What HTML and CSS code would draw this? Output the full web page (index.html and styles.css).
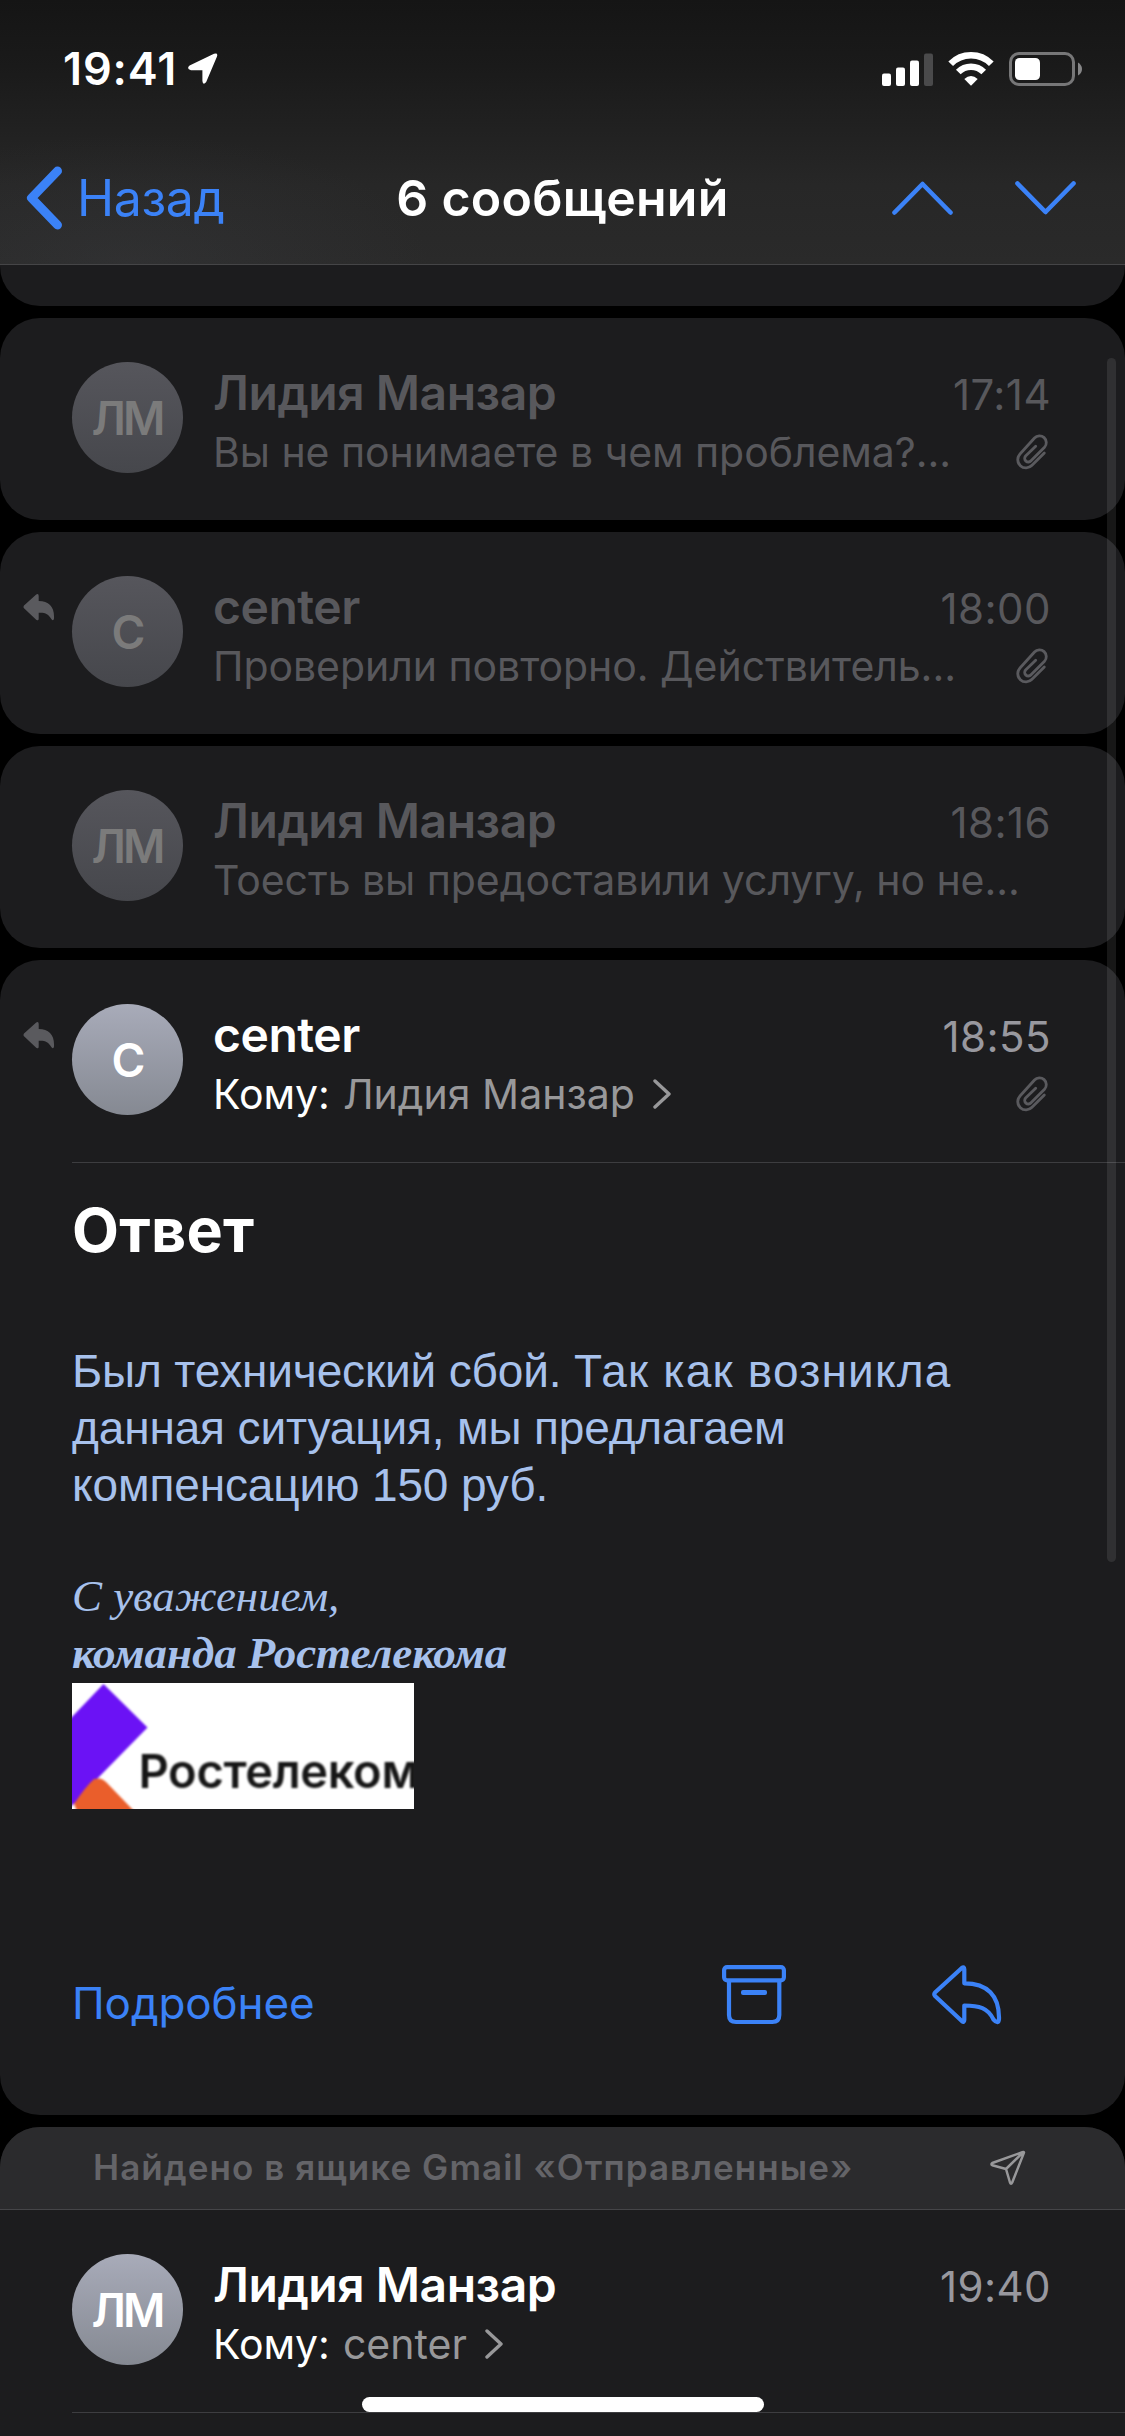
FILE: index.html
```html
<!DOCTYPE html>
<html lang="ru">
<head>
<meta charset="utf-8">
<title>6 сообщений</title>
<link rel="stylesheet" href="styles.css">
</head>
<body>
<svg class="symbols" width="0" height="0" aria-hidden="true">
  <symbol id="clip" viewBox="0 0 32 36"><path d="M28.3 19 16 31.3A8.2 8.2 0 0 1 4 20L18.5 4A6.7 6.7 0 0 1 28.5 13.2L15 26.8A3.6 3.6 0 0 1 9.6 22L19.7 12.2" fill="none" stroke="currentColor" stroke-width="2.8" stroke-linecap="round" stroke-linejoin="round"/></symbol>
  <symbol id="replied" viewBox="0 0 32 27"><path d="M1 11.6Q0 12.9 1 14.2L13.2 25.8Q15.6 27.3 15.7 24.8V18.8C22 18.4 25.5 20 28.3 25Q30.5 27.6 31 24.5C31.7 13 26 7 15.7 7V2Q15.6-.9 13.2 .6Z" fill="currentColor"/></symbol>
  <symbol id="more" viewBox="0 0 18 30"><path d="M2 2 16 15 2 28" fill="none" stroke="currentColor" stroke-width="3.4" stroke-linecap="round" stroke-linejoin="round"/></symbol>
</svg>

<div class="screen">
  <header class="top">
    <div class="status">
      <span class="clock">19:41</span>
      <svg class="location" width="30" height="32" viewBox="0 0 30 32"><path d="M26 .8Q30.2-.6 29 3.4L18.2 29Q15 33 14.4 28V17.3H3Q-2 15.8 1.6 12.6Z" fill="#fff"/></svg>
      <div class="indicators">
        <svg width="51" height="33" viewBox="0 0 51 33"><g fill="#fff"><rect y="20.5" width="9" height="12.5" rx="2"/><rect x="14" y="14.5" width="9" height="18.5" rx="2"/><rect x="28" y="7.5" width="9" height="25.500" rx="2"/></g><rect x="42" y=".5" width="9" height="32.500" rx="2" fill="#4a4a4b"/></svg>
        <svg width="46" height="34" viewBox="0 0 46 34"><g fill="none" stroke="#fff" stroke-width="6.600"><path d="M2.700 11.800A28.500 28.500 0 0 1 43.300 11.800"/><path d="M10.300 20A18 18 0 0 1 35.700 20"/></g><path d="M16.300 27Q23 21 29.700 27L23 33.800Z" fill="#fff"/></svg>
        <svg width="73" height="34" viewBox="0 0 73 34"><rect x="1.500" y="1.500" width="63" height="31" rx="8.500" fill="none" stroke="#777778" stroke-width="3"/><rect x="6" y="6" width="25" height="22" rx="4.500" fill="#fff"/><path d="M69 10.500Q73 13 73 17T69 23.500Z" fill="#868687"/></svg>
      </div>
    </div>
    <nav class="nav">
      <a class="back">
        <svg width="37" height="64" viewBox="0 0 37 64"><path d="M31.500 5 5.500 32 31.500 59" fill="none" stroke="currentColor" stroke-width="9" stroke-linecap="round" stroke-linejoin="round"/></svg>
        <span>Назад</span>
      </a>
      <h1 class="heading">6 сообщений</h1>
      <div class="steps">
        <svg width="61" height="34" viewBox="0 0 61 34"><path d="M2.500 31.500 30.500 3 58.500 31.500" fill="none" stroke="currentColor" stroke-width="4.600" stroke-linecap="round" stroke-linejoin="round"/></svg>
        <svg width="61" height="34" viewBox="0 0 61 34"><path d="M2.500 2.500 30.500 31 58.500 2.500" fill="none" stroke="currentColor" stroke-width="4.600" stroke-linecap="round" stroke-linejoin="round"/></svg>
      </div>
    </nav>
  </header>

  <main class="thread">
    <section class="card card-tail"></section>

    <article class="card message read">
      <div class="gutter"></div>
      <div class="avatar">ЛМ</div>
      <div class="summary">
        <div class="row"><span class="sender">Лидия Манзар</span><time>17:14</time></div>
        <div class="row"><span class="preview">Вы не понимаете в чем проблема?...</span><svg class="clip" width="32" height="36"><use href="#clip"/></svg></div>
      </div>
    </article>

    <article class="card message read">
      <div class="gutter"><svg width="32" height="27"><use href="#replied"/></svg></div>
      <div class="avatar">C</div>
      <div class="summary">
        <div class="row"><span class="sender">center</span><time>18:00</time></div>
        <div class="row"><span class="preview">Проверили повторно. Действитель...</span><svg class="clip" width="32" height="36"><use href="#clip"/></svg></div>
      </div>
    </article>

    <article class="card message read">
      <div class="gutter"></div>
      <div class="avatar">ЛМ</div>
      <div class="summary">
        <div class="row"><span class="sender">Лидия Манзар</span><time>18:16</time></div>
        <div class="row"><span class="preview">Тоесть вы предоставили услугу, но не...</span></div>
      </div>
    </article>

    <article class="card opened">
      <div class="message">
        <div class="gutter"><svg width="32" height="27"><use href="#replied"/></svg></div>
        <div class="avatar">C</div>
        <div class="summary">
          <div class="row"><span class="sender">center</span><time>18:55</time></div>
          <div class="row"><span class="recipient"><b>Кому:</b><span>Лидия Манзар</span><svg width="18" height="30"><use href="#more"/></svg></span><svg class="clip" width="32" height="36"><use href="#clip"/></svg></div>
        </div>
      </div>
      <div class="content">
        <h2 class="subject">Ответ</h2>
        <p class="text">Был технический сбой. <span class="loose">Так как возникла</span><br>данная ситуация, мы предлагаем<br>компенсацию 150 руб.</p>
        <p class="signature">С уважением,<br><strong>команда Ростелекома</strong></p>
        <svg class="logo" width="342" height="126" viewBox="0 0 342 126">
          <rect width="342" height="126" fill="#fff"/>
          <g class="logo-art">
            <path d="M31.500 1 75.500 44.500 25 96 4 119-2 124V36Z" fill="#6b12f5"/>
            <path d="M28 95.500Q31 96 34 99L62 128H5L2 121Q14 103 22 96Z" fill="#ea5e2b"/>
            <text class="logo-name" x="66.500" y="104.500">Ростелеком</text>
          </g>
        </svg>
      </div>
      <footer class="actions">
        <a class="details">Подробнее</a>
        <svg class="archive" width="64" height="60" viewBox="0 0 64 60"><g fill="none" stroke="currentColor" stroke-width="4.200"><rect x="2.100" y="2.100" width="59.800" height="13.200" rx="3"/><path d="M7 16V50Q7 57 14 57H50.300Q57.300 57 57.300 50V16"/></g><rect x="19" y="25" width="26" height="5" rx="2" fill="currentColor"/></svg>
        <svg class="reply" width="70" height="60" viewBox="0 0 70 60"><path d="M32.300 4.200Q32.300 1 29.800 3L3 27.500Q1.600 29.200 3 31L29.800 56Q32.300 58 32.300 55V40.500C47 40.500 56 43 61.500 54.500Q66.500 60 67 54C67.500 30 55 18.300 32.300 18.300Z" fill="none" stroke="currentColor" stroke-width="4.200" stroke-linejoin="round"/></svg>
      </footer>
    </article>

    <article class="card sent">
      <div class="mailbox">
        <span>Найдено в ящике Gmail «Отправленные»</span>
        <svg width="36" height="36" viewBox="0 0 36 36"><path d="M33 2 2.300 13Q.6 14.200 2.300 15.200L16 19 20 32.500Q21 35.200 22.200 32.500L34 2.600Q34 1.600 33 2ZM33.500 2 16 19" fill="none" stroke="#98989a" stroke-width="2.500" stroke-linejoin="round"/></svg>
      </div>
      <div class="message">
        <div class="gutter"></div>
        <div class="avatar">ЛМ</div>
        <div class="summary">
          <div class="row"><span class="sender">Лидия Манзар</span><time>19:40</time></div>
          <div class="row"><span class="recipient"><b>Кому:</b><span>center</span><svg width="18" height="30"><use href="#more"/></svg></span></div>
        </div>
      </div>
      <div class="content"></div>
    </article>
  </main>

  <div class="scrollbar"></div>
  <div class="home-indicator"></div>
</div>
</body>
</html>
```
FILE: styles.css
```css
* { box-sizing: border-box; }

body {
  margin: 0;
  background: #000;
  color: #fff;
  font-family: Inter, "Liberation Sans", sans-serif;
}

svg { display: block; flex: none; }
h1, h2, p { margin: 0; }
.symbols { position: absolute; }

.screen {
  position: relative;
  width: 1125px;
  height: 2436px;
  overflow: hidden;
}

/* Status bar and navigation */
.top {
  height: 265px;
  border-bottom: 1px solid #454547;
  background:
    radial-gradient(ellipse 300px 130px at 130px 264px, rgba(70, 72, 78, .22), transparent),
    linear-gradient(#151515, #1a1a1a 25%, #272727 70%, #2a2a2a);
}

.status {
  display: flex;
  align-items: center;
  height: 132px;
  padding: 6px 43px 0 63px;
}

.clock {
  font-size: 45px;
  font-weight: 600;
  line-height: 60px;
  letter-spacing: .9px;
}

.location { margin-left: 11px; }

.indicators {
  display: flex;
  align-items: center;
  gap: 15px;
  margin-left: auto;
}

.nav {
  display: grid;
  grid-template-columns: 1fr auto 1fr;
  align-items: center;
  height: 132px;
  padding: 0 49px 0 26px;
  color: #3b82f7;
}

.back {
  display: flex;
  align-items: center;
  gap: 14px;
  font-size: 50px;
  line-height: 60px;
  letter-spacing: -.4px;
}

.heading {
  margin-left: 23px;
  color: #fff;
  font-size: 50px;
  font-weight: 600;
  line-height: 60px;
  letter-spacing: .28px;
}

.steps {
  display: flex;
  justify-content: flex-end;
  gap: 62px;
}

/* Conversation cards */
.thread {
  display: flex;
  flex-direction: column;
  gap: 12px;
}

.card {
  flex: none;
  overflow: hidden;
  border-radius: 40px;
  background: #1c1c1e;
}

.card-tail {
  height: 41px;
  border-radius: 0 0 40px 40px;
}

.message {
  display: flex;
  height: 202px;
  padding-right: 74px;
}

.gutter {
  flex: none;
  width: 72px;
  padding: 62px 0 0 23px;
  color: #5a5a5e;
}

.avatar {
  flex: none;
  width: 111px;
  height: 111px;
  margin: 44px 30px 0 0;
  padding-right: 1px;
  border-radius: 50%;
  background: linear-gradient(#a8abb9, #858992);
  font-size: 46px;
  font-weight: 600;
  line-height: 113px;
  letter-spacing: -3px;
  text-align: center;
}

.summary {
  flex: 1;
  display: flex;
  flex-direction: column;
  gap: 3px;
  padding-top: 47px;
}

.row {
  display: flex;
  align-items: baseline;
  justify-content: space-between;
  height: 56px;
  line-height: 56px;
  white-space: nowrap;
}

.sender {
  font-size: 48px;
  font-weight: 600;
  letter-spacing: -.47px;
}

time {
  color: #98989f;
  font-size: 42px;
  letter-spacing: .45px;
}

.preview { font-size: 41px; letter-spacing: -.05px; }

.clip {
  align-self: center;
  margin-right: 3px;
  color: #5a5a5e;
}

.recipient {
  display: flex;
  align-items: center;
  color: #98989a;
  font-size: 41px;
}

.recipient b {
  margin-right: 13px;
  color: #fff;
  font-weight: 400;
}

.recipient svg { margin-left: 18px; }

.read .sender, .read time, .read .preview { color: #58585c; }

.read .avatar {
  background: linear-gradient(#56565c, #46474c);
  color: #7b7b7b;
}

/* Opened message */
.opened {
  display: flex;
  flex-direction: column;
  height: 1155px;
}

.content {
  margin-left: 72px;
  border-top: 1px solid #3d3d40;
}

.subject {
  margin-top: 31px;
  font-size: 61px;
  font-weight: 700;
  line-height: 72px;
  letter-spacing: .23px;
}

.text {
  margin-top: 77px;
  color: #a7c1ec;
  font: 46px/57px "Liberation Sans", sans-serif;
  letter-spacing: -.14px;
}

.loose { letter-spacing: 1.2px; }

.signature {
  margin-top: 54px;
  color: #a7c1ec;
  font: italic 45px/57px "Liberation Serif", serif;
  letter-spacing: -.05px;
}

.logo { margin-top: 1px; }
.logo-art { filter: blur(.8px); }

.logo-name {
  fill: #161616;
  font-size: 47px;
  font-weight: 600;
  letter-spacing: -.35px;
}

.actions {
  display: flex;
  align-items: center;
  height: 60px;
  margin-top: 156px;
  padding: 0 123px 0 72px;
  color: #3b82f7;
}

.details {
  margin: 16px auto 0 0;
  font-size: 44px;
  line-height: 60px;
  letter-spacing: -.1px;
}

.reply { margin-left: 146px; }

/* Message found in another mailbox */
.sent {
  height: 340px;
  border-radius: 40px 40px 0 0;
}

.mailbox {
  display: flex;
  align-items: center;
  justify-content: space-between;
  height: 83px;
  padding: 0 99px 0 93px;
  border-bottom: 1px solid #454548;
  background: #2b2b2d;
  color: #646468;
  font-size: 35px;
  font-weight: 600;
  line-height: 44px;
  letter-spacing: 1.06px;
}

.mailbox span { margin-bottom: 2px; }

/* System overlays */
.scrollbar {
  position: absolute;
  top: 358px;
  left: 1107px;
  width: 9px;
  height: 1204px;
  border-radius: 5px;
  background: rgba(255, 255, 255, .09);
}

.home-indicator {
  position: absolute;
  top: 2397px;
  left: 362px;
  width: 402px;
  height: 15px;
  border-radius: 8px;
  background: #fff;
}
```
